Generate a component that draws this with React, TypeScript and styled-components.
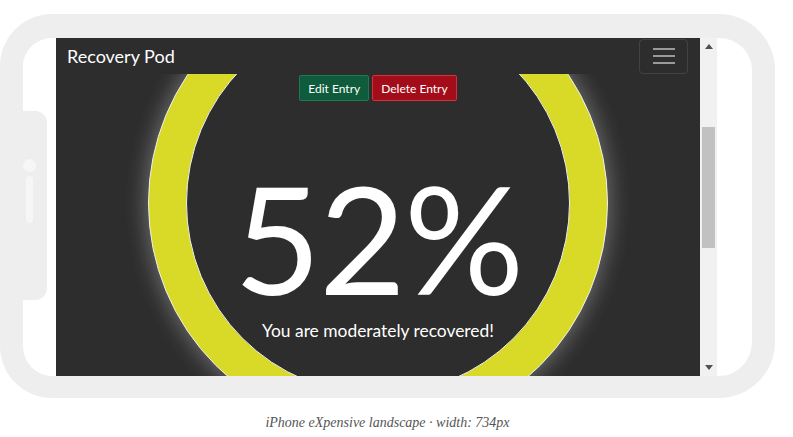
import React from 'react'
import styled, { createGlobalStyle } from 'styled-components'

const GlobalStyle = createGlobalStyle`
  body {
    margin: 0;
    background: #fff;
  }
`

const Page = styled.div`
  width: 775px;
  padding-top: 14px;
`

const Frame = styled.div`
  position: relative;
  display: flex;
  height: 338px;
  padding: 0 35px 0 33px;
  border: 23px solid #eeeeee;
  border-top-width: 24px;
  border-bottom-width: 22px;
  border-radius: 52px 56px 56px 52px;
`

const SideButton = styled.div`
  position: absolute;
  left: -23px;
  top: 73px;
  width: 47px;
  height: 189px;
  background: #eeeeee;
  border-radius: 0 12px 12px 0;
  display: flex;
  flex-direction: column;
  align-items: center;
  padding-top: 48px;
  padding-left: 12px;
  box-sizing: border-box;
  gap: 4px;
`

const Dot = styled.span`
  width: 13px;
  height: 13px;
  border-radius: 50%;
  background: #f6f6f6;
`

const Pill = styled.span`
  width: 7px;
  height: 47px;
  border-radius: 4px;
  background: #f6f6f6;
`

const Screen = styled.div`
  display: flex;
  flex-direction: column;
  width: 644px;
  height: 338px;
  background: #2d2d2d;
  font-family: Lato, 'Liberation Sans', sans-serif;
  color: #fff;
`

const NavBar = styled.div`
  position: relative;
  z-index: 2;
  display: flex;
  align-items: center;
  justify-content: space-between;
  height: 36px;
  padding: 0 12px 0 11px;
  background: #2d2d2d;
`

const Brand = styled.span`
  font-size: 18px;
  color: #fff;
`

const Toggler = styled.div`
  display: flex;
  flex-direction: column;
  align-items: center;
  justify-content: center;
  gap: 5px;
  width: 49px;
  height: 35px;
  box-sizing: border-box;
  border: 1px solid rgba(255, 255, 255, 0.1);
  border-radius: 4px;
`

const TogglerLine = styled.span`
  width: 22px;
  height: 2px;
  background: #9a9a9a;
`

const Content = styled.div`
  position: relative;
  flex: 1;
  overflow: hidden;
  display: flex;
  flex-direction: column;
  align-items: center;
`

const Actions = styled.div`
  position: relative;
  z-index: 1;
  display: flex;
  gap: 3px;
  height: 26px;
  margin-top: 1px;
`

const ActionButton = styled.button<{ $tone: 'edit' | 'delete' }>`
  height: 26px;
  padding: 0 8px;
  font-family: Lato, 'Liberation Sans', sans-serif;
  font-size: 12px;
  color: #fff;
  border-radius: 2px;
  border: 1px solid ${({ $tone }) => ($tone === 'edit' ? '#1f7a4f' : '#d3303c')};
  background: ${({ $tone }) => ($tone === 'edit' ? '#0e5c3b' : '#a30d19')};
`

const Ring = styled.div`
  flex-shrink: 0;
  margin-top: -128px;
  width: 460px;
  height: 460px;
  box-sizing: border-box;
  border-radius: 50%;
  border: 1px solid #f0f0f0;
  background: #d9d927;
  box-shadow: 0 0 22px 2px rgba(255, 255, 255, 0.32);
  display: flex;
  align-items: center;
  justify-content: center;
`

const Dial = styled.div`
  width: 384px;
  height: 384px;
  box-sizing: border-box;
  border-radius: 50%;
  border: 1px solid #f0f0f0;
  background: #2d2d2d;
  display: flex;
  flex-direction: column;
  align-items: center;
  padding-top: 150px;
`

const Percent = styled.div`
  font-size: 150px;
  font-weight: 400;
  line-height: 1;
  letter-spacing: -2px;
`

const Message = styled.div`
  margin-top: 9px;
  font-size: 17.4px;
  line-height: 20px;
`

const ScrollBar = styled.div`
  display: flex;
  flex-direction: column;
  width: 17px;
  height: 338px;
  background: #f1f1f1;
`

const Arrow = styled.div`
  display: flex;
  align-items: center;
  justify-content: center;
  height: 17px;
`

const Track = styled.div`
  flex: 1;
  padding: 72px 2px 0;
`

const Thumb = styled.div`
  height: 121px;
  background: #c1c1c1;
`

const Caption = styled.div`
  margin-top: 15px;
  text-align: center;
  font-family: 'Liberation Serif', serif;
  font-style: italic;
  font-size: 14px;
  line-height: 20px;
  color: #555;
`

export default function App() {
  return (
    <Page>
      <GlobalStyle />
      <Frame>
        <SideButton>
          <Dot />
          <Pill />
        </SideButton>
        <Screen>
          <NavBar>
            <Brand>Recovery Pod</Brand>
            <Toggler>
              <TogglerLine />
              <TogglerLine />
              <TogglerLine />
            </Toggler>
          </NavBar>
          <Content>
            <Actions>
              <ActionButton $tone="edit">Edit Entry</ActionButton>
              <ActionButton $tone="delete">Delete Entry</ActionButton>
            </Actions>
            <Ring>
              <Dial>
                <Percent>52%</Percent>
                <Message>You are moderately recovered!</Message>
              </Dial>
            </Ring>
          </Content>
        </Screen>
        <ScrollBar>
          <Arrow>
            <svg width="8" height="5" viewBox="0 0 8 5">
              <polygon points="0,5 8,5 4,0" fill="#505050" />
            </svg>
          </Arrow>
          <Track>
            <Thumb />
          </Track>
          <Arrow>
            <svg width="8" height="5" viewBox="0 0 8 5">
              <polygon points="0,0 8,0 4,5" fill="#505050" />
            </svg>
          </Arrow>
        </ScrollBar>
      </Frame>
      <Caption>iPhone eXpensive landscape · width: 734px</Caption>
    </Page>
  )
}
